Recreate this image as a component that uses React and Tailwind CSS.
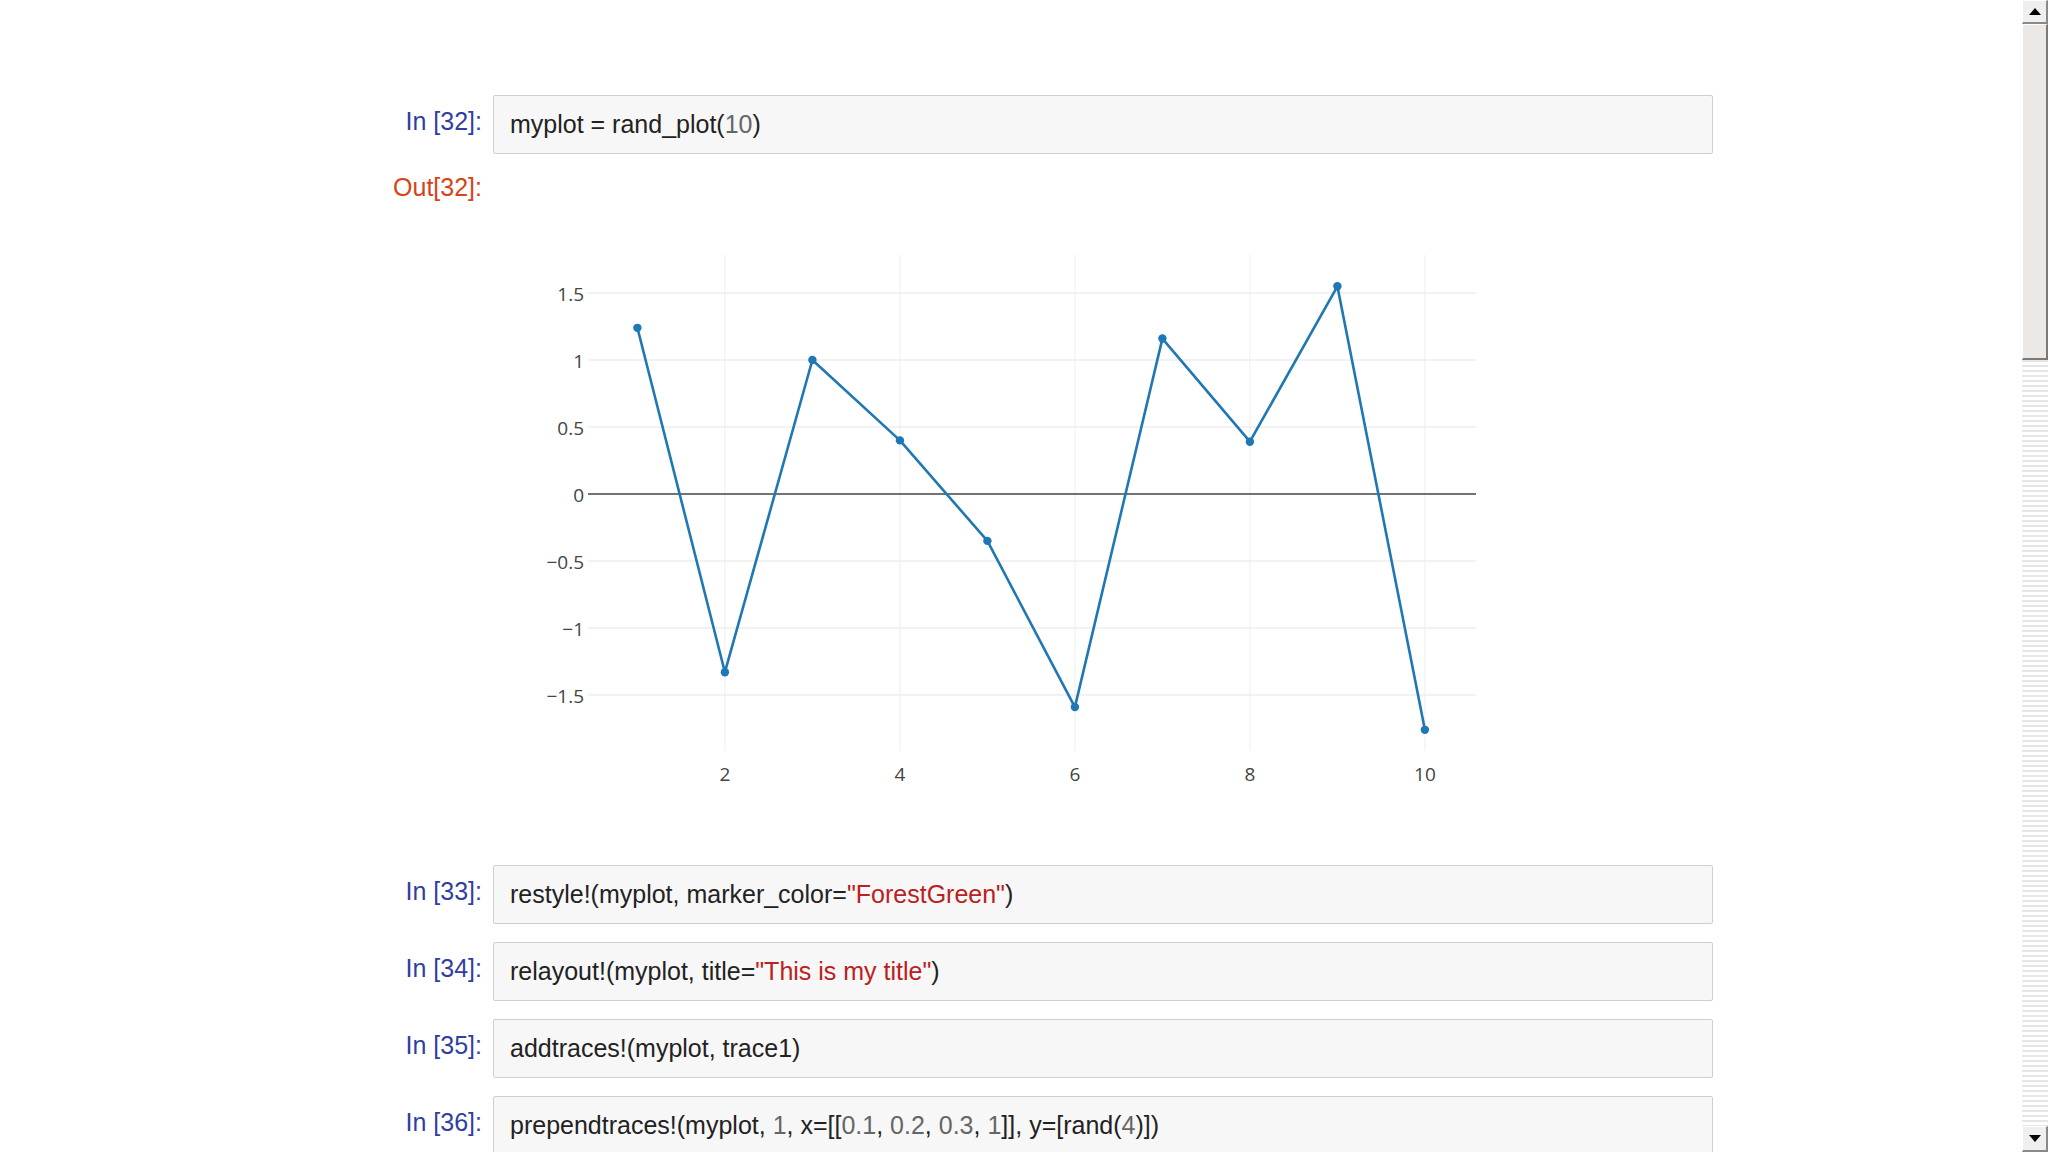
import React from "react";

const PTS = [1.24, -1.33, 1.0, 0.4, -0.35, -1.59, 1.16, 0.39, 1.55, -1.76];

// plot coordinates relative to the svg (svg origin at page x=493, y=170)
const OX = 493;
const OY = 170;
const X = (v) => 637.4 + (v - 1) * 87.5 - OX;
const Y = (v) => 494 - v * 134 - OY;

function Plot() {
  const left = 588 - OX;
  const right = 1476 - OX;
  const top = 255 - OY;
  const bottom = 751 - OY;
  const yTicks = [1.5, 1, 0.5, -0.5, -1, -1.5];
  const yLabel = (v) => (v < 0 ? "\u2212" + String(Math.abs(v)) : String(v));
  const xTicks = [2, 4, 6, 8, 10];
  const line = PTS.map((v, i) => `${X(i + 1).toFixed(1)},${Y(v).toFixed(1)}`).join(" ");
  return (
    <svg width="1220" height="680" viewBox="0 0 1220 680" className="block">
      {xTicks.map((t) => (
        <line key={"vx" + t} x1={X(t)} x2={X(t)} y1={top} y2={bottom} stroke="#eeeeee" strokeWidth="1" />
      ))}
      {yTicks.map((t) => (
        <line key={"hy" + t} x1={left} x2={right} y1={Y(t)} y2={Y(t)} stroke="#eeeeee" strokeWidth="1.3" />
      ))}
      <line x1={left} x2={right} y1={Y(0)} y2={Y(0)} stroke="#444444" strokeWidth="1.6" />
      {[...yTicks, 0].map((t) => (
        <text
          key={"ly" + t}
          x={584 - OX}
          y={Y(t) + 8}
          textAnchor="end"
          fontFamily="'Open Sans', 'DejaVu Sans', sans-serif"
          fontSize="19"
          fill="#444444"
        >
          {yLabel(t)}
        </text>
      ))}
      {xTicks.map((t) => (
        <text
          key={"lx" + t}
          x={X(t)}
          y={781 - OY}
          textAnchor="middle"
          fontFamily="'Open Sans', 'DejaVu Sans', sans-serif"
          fontSize="19"
          fill="#444444"
        >
          {t}
        </text>
      ))}
      <polyline points={line} fill="none" stroke="#1f77b4" strokeWidth="2.6" strokeLinejoin="round" />
      {PTS.map((v, i) => (
        <circle key={"p" + i} cx={X(i + 1)} cy={Y(v)} r="4.2" fill="#1f77b4" />
      ))}
    </svg>
  );
}

const G = ({ children }) => <span className="text-[#666666]">{children}</span>;
const S = ({ children }) => <span className="text-[#ba2121]">{children}</span>;

function Cell({ n, children, className = "" }) {
  return (
    <div className={"flex " + className}>
      <div className="w-[112px] shrink-0 pt-[11px] text-right leading-[30px] text-[#303f9f]">In [{n}]:</div>
      <div className="ml-[11px] flex h-[59px] w-[1220px] shrink-0 items-center rounded-[2px] border border-[#cfcfcf] bg-[#f7f7f7] pb-[2px] pl-4 leading-[30px] text-[#222222]">
        <span className="whitespace-pre">{children}</span>
      </div>
    </div>
  );
}

function ScrollBar() {
  return (
    <div className="flex h-[1152px] w-[26px] shrink-0 flex-col bg-white">
      <div className="flex h-[24px] items-center justify-center border-t border-l border-b-2 border-r-2 border-t-white border-l-white border-b-[#8a8a8a] border-r-[#8a8a8a] bg-[#efefef]">
        <div className="h-0 w-0 border-x-[6px] border-b-[7px] border-x-transparent border-b-black" />
      </div>
      <div className="h-[336px] border-t border-l border-b-2 border-r-2 border-t-white border-l-white border-b-[#7a7a7a] border-r-[#7a7a7a] bg-[#ebe8e6]" />
      <div className="flex-1 bg-[repeating-linear-gradient(180deg,#e6e6e6_0px,#e6e6e6_2px,#ffffff_2px,#ffffff_5px)]" />
      <div className="flex h-[26px] items-center justify-center border-t border-l border-b-2 border-r-2 border-t-white border-l-white border-b-[#8a8a8a] border-r-[#8a8a8a] bg-[#efefef]">
        <div className="h-0 w-0 border-x-[6px] border-t-[7px] border-x-transparent border-t-black" />
      </div>
    </div>
  );
}

export default function App() {
  return (
    <div className="flex h-[1152px] w-[2048px] overflow-hidden bg-white font-['Liberation_Sans',Arial,sans-serif] text-[25px]">
      <div className="flex-1 pl-[370px] pt-[95px]">
        <Cell n={32}>
          myplot = rand_plot(<G>10</G>)
        </Cell>
        <div className="mt-[16px] flex">
          <div className="w-[112px] shrink-0 pt-[2px] text-right leading-[30px] text-[#d84315]">Out[32]:</div>
          <div className="ml-[11px]">
            <Plot />
          </div>
        </div>
        <Cell n={33} className="mt-[15px]">
          restyle!(myplot, marker_color=<S>"ForestGreen"</S>)
        </Cell>
        <Cell n={34} className="mt-[18px]">
          relayout!(myplot, title=<S>"This is my title"</S>)
        </Cell>
        <Cell n={35} className="mt-[18px]">
          addtraces!(myplot, trace1)
        </Cell>
        <Cell n={36} className="mt-[18px]">
          prependtraces!(myplot, <G>1</G>, x=[[<G>0.1</G>, <G>0.2</G>, <G>0.3</G>, <G>1</G>]], y=[rand(<G>4</G>)])
        </Cell>
      </div>
      <ScrollBar />
    </div>
  );
}
